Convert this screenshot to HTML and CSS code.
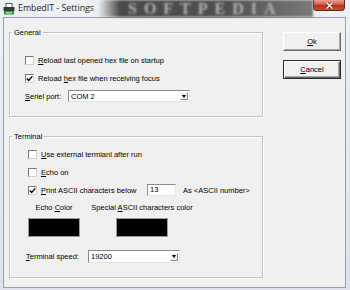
FILE: index.html
```html
<!DOCTYPE html>
<html>
<head>
<title>EmbedIT - Settings</title>
<link rel="stylesheet" href="styles.css">
</head>
<body>
<div class="window">
    <div class="titlebar">
        <svg class="app-icon" viewBox="0 0 12 12">
            <rect x="3" y="0.5" width="6" height="4" fill="#fff" stroke="#555" stroke-width="1"/>
            <rect x="0.5" y="4" width="11" height="4" fill="#3a3a3a"/>
            <rect x="1" y="8" width="10" height="3.5" fill="#2f9a3a"/>
            <rect x="3" y="9" width="6" height="1.5" fill="#9fe0a0"/>
        </svg>
        <span class="title">EmbedIT - Settings</span>
        <div class="watermark"><span>SOFTPEDIA</span></div>
        <div class="close-btn">
            <svg viewBox="0 0 9 7" width="9" height="7">
                <path d="M1.5 0.5 L7.5 6.5 M7.5 0.5 L1.5 6.5" stroke="#5a1a12" stroke-width="2.6"/>
                <path d="M1.5 0.5 L7.5 6.5 M7.5 0.5 L1.5 6.5" stroke="#fff" stroke-width="1.5"/>
            </svg>
        </div>
    </div>

    <div class="client">
        <div class="groups">
            <fieldset class="group">
                <legend>General</legend>
                <div class="group-body general-body">
                    <label class="check"><span class="box"></span><span><u>R</u>eload last opened hex file on startup</span></label>
                    <label class="check"><span class="box checked"><svg viewBox="0 0 7 7"><path d="M0.8 3.4 L2.7 5.4 L6.3 1.4" fill="none" stroke="#000" stroke-width="1.4"/></svg></span><span>Reload <u>h</u>ex file when receiving focus</span></label>
                    <div class="field">
                        <span class="field-label port-label"><u>S</u>eriel port:</span>
                        <div class="select port-select">
                            <span class="select-value">COM 2</span>
                            <span class="select-btn"><span class="arrow"></span></span>
                        </div>
                    </div>
                </div>
            </fieldset>

            <fieldset class="group terminal">
                <legend>Terminal</legend>
                <div class="group-body terminal-body">
                    <label class="check"><span class="box"></span><span><u>U</u>se external termianl after run</span></label>
                    <label class="check"><span class="box"></span><span><u>E</u>cho on</span></label>
                    <div class="check">
                        <span class="box checked"><svg viewBox="0 0 7 7"><path d="M0.8 3.4 L2.7 5.4 L6.3 1.4" fill="none" stroke="#000" stroke-width="1.4"/></svg></span>
                        <span class="print-label"><u>P</u>rint ASCII characters below</span>
                        <span class="textbox">13</span>
                        <span class="as-label">As &lt;ASCII number&gt;</span>
                    </div>

                    <div class="colors">
                        <div class="color-col echo-col">
                            <span>Echo <u>C</u>olor</span>
                            <div class="swatch"></div>
                        </div>
                        <div class="color-col special-col">
                            <span>Special <u>A</u>SCII characters color</span>
                            <div class="swatch"></div>
                        </div>
                    </div>

                    <div class="field speed-field">
                        <span class="field-label speed-label"><u>T</u>erminal speed:</span>
                        <div class="select speed-select">
                            <span class="select-value">19200</span>
                            <span class="select-btn"><span class="arrow"></span></span>
                        </div>
                    </div>
                </div>
            </fieldset>
        </div>

        <div class="buttons">
            <button class="btn"><u>O</u>k</button>
            <button class="btn btn-focus"><u>C</u>ancel</button>
        </div>
    </div>
</div>
</body>
</html>
```

FILE: styles.css
```css
body {
    margin: 0;
    font-family: "Liberation Sans", Arial, sans-serif;
    font-size: 7.5px;
    color: #000;
    background: #fff;
}

.window {
    width: 350px;
    height: 290px;
    display: flex;
    flex-direction: column;
    background: linear-gradient(#eef1f4, #dde3e8);
    overflow: hidden;
}

/* title bar */
.titlebar {
    height: 17px;
    flex: none;
    display: flex;
    align-items: flex-start;
}

.app-icon {
    width: 12px;
    height: 12px;
    margin: 3px 0 0 3px;
    flex: none;
}

.title {
    font-family: "Open Sans", "Noto Sans", sans-serif;
    font-size: 8.8px;
    line-height: 17px;
    margin-left: 3px;
    color: #1c1c1c;
    white-space: nowrap;
}

.watermark {
    width: 215px;
    height: 17px;
    margin-left: auto;
    flex: none;
    background: linear-gradient(to right, rgba(70, 70, 70, 0) 0, #4a4a4a 22px, #505050 60%, #7a7a7a 100%);
    filter: blur(0.8px);
}

.watermark span {
    display: block;
    margin-left: 30px;
    font-family: "Liberation Serif", serif;
    font-weight: bold;
    font-size: 16px;
    line-height: 17px;
    letter-spacing: 7px;
    color: #b4b4b4;
    white-space: nowrap;
}

.close-btn {
    width: 32px;
    height: 11px;
    margin-right: 5px;
    flex: none;
    box-sizing: border-box;
    border: 1px solid #6a2418;
    border-top: none;
    border-radius: 0 0 4px 4px;
    background: linear-gradient(#e7a091, #d05a44 45%, #b8301c 55%, #c8503a);
    display: flex;
    align-items: center;
    justify-content: center;
}

/* client area */
.client {
    flex: 1;
    margin: 0 4px 2px 3px;
    border: 1px solid #97a0aa;
    background: #f0f0f0;
    display: flex;
}

.groups {
    width: 254px;
    padding: 10px 0 0 5px;
}

.group {
    margin: 0;
    padding: 0;
    border: 1px solid #c3c3c3;
    box-shadow: inset 1px 1px 0 #fff, 1px 1px 0 #fff;
}

.group legend {
    margin-left: 2px;
    padding: 0 2px;
    line-height: 9px;
}

.terminal {
    margin-top: 15px;
}

.general-body {
    padding: 14px 0 11px 15px;
}

.terminal-body {
    padding: 4px 0 14px 18px;
}

.check {
    display: flex;
    align-items: center;
    height: 18px;
    white-space: nowrap;
}

.box {
    width: 9px;
    height: 9px;
    box-sizing: border-box;
    margin-right: 4px;
    border: 1px solid;
    border-color: #7a7a7a #d4d4d4 #d4d4d4 #7a7a7a;
    background: #fff;
    display: flex;
    align-items: center;
    justify-content: center;
    flex: none;
}

.box svg {
    width: 7px;
    height: 7px;
}

.field {
    display: flex;
    align-items: center;
    height: 18px;
}

.field-label {
    white-space: nowrap;
    flex: none;
}

.port-label {
    width: 43px;
}

.select {
    display: flex;
    align-items: center;
    box-sizing: border-box;
    height: 12px;
    border: 1px solid;
    border-color: #8a8a8a #e2e2e2 #e2e2e2 #8a8a8a;
    background: #fff;
}

.port-select {
    width: 122px;
}

.select-value {
    flex: 1;
    padding-left: 2px;
}

.select-btn {
    width: 8px;
    height: 8px;
    margin-right: 1px;
    box-sizing: border-box;
    border: 1px solid;
    border-color: #fff #8a8a8a #8a8a8a #fff;
    background: #ececec;
    display: flex;
    align-items: center;
    justify-content: center;
}

.arrow {
    width: 0;
    height: 0;
    border-left: 2.5px solid transparent;
    border-right: 2.5px solid transparent;
    border-top: 3px solid #000;
}

.print-label {
    width: 106px;
    flex: none;
}

.textbox {
    width: 29px;
    height: 12px;
    box-sizing: border-box;
    padding-left: 2px;
    line-height: 10px;
    border: 1px solid;
    border-color: #8a8a8a #e2e2e2 #e2e2e2 #8a8a8a;
    background: #fff;
    flex: none;
}

.as-label {
    margin-left: 7px;
}

.colors {
    display: flex;
    margin-top: 4px;
}

.color-col {
    display: flex;
    flex-direction: column;
    align-items: center;
    white-space: nowrap;
    line-height: 10px;
}

.echo-col {
    width: 52px;
}

.special-col {
    width: 104px;
    margin-left: 10px;
}

.swatch {
    width: 52px;
    height: 19px;
    box-sizing: border-box;
    margin-top: 5px;
    background: #000;
    border: 1px solid #9a9a9a;
}

.speed-field {
    margin: 13px 0 0 -2px;
    height: 13px;
}

.speed-label {
    width: 62px;
}

.speed-select {
    width: 92px;
    height: 13px;
}

/* dialog buttons */
.buttons {
    margin-left: 20px;
    padding-top: 14px;
    display: flex;
    flex-direction: column;
    gap: 9px;
}

.btn {
    width: 58px;
    height: 19px;
    padding: 0;
    box-sizing: border-box;
    font: inherit;
    color: #000;
    border: 1px solid;
    border-color: #fff #6a6a6a #6a6a6a #fff;
    box-shadow: inset -1px -1px 0 #a8a8a8;
    background: #f0f0f0;
}

.btn-focus {
    border: 1px solid #2a2a2a;
    box-shadow: inset 1px 1px 0 #fff, inset -1px -1px 0 #6a6a6a, inset -2px -2px 0 #a8a8a8;
}
```
